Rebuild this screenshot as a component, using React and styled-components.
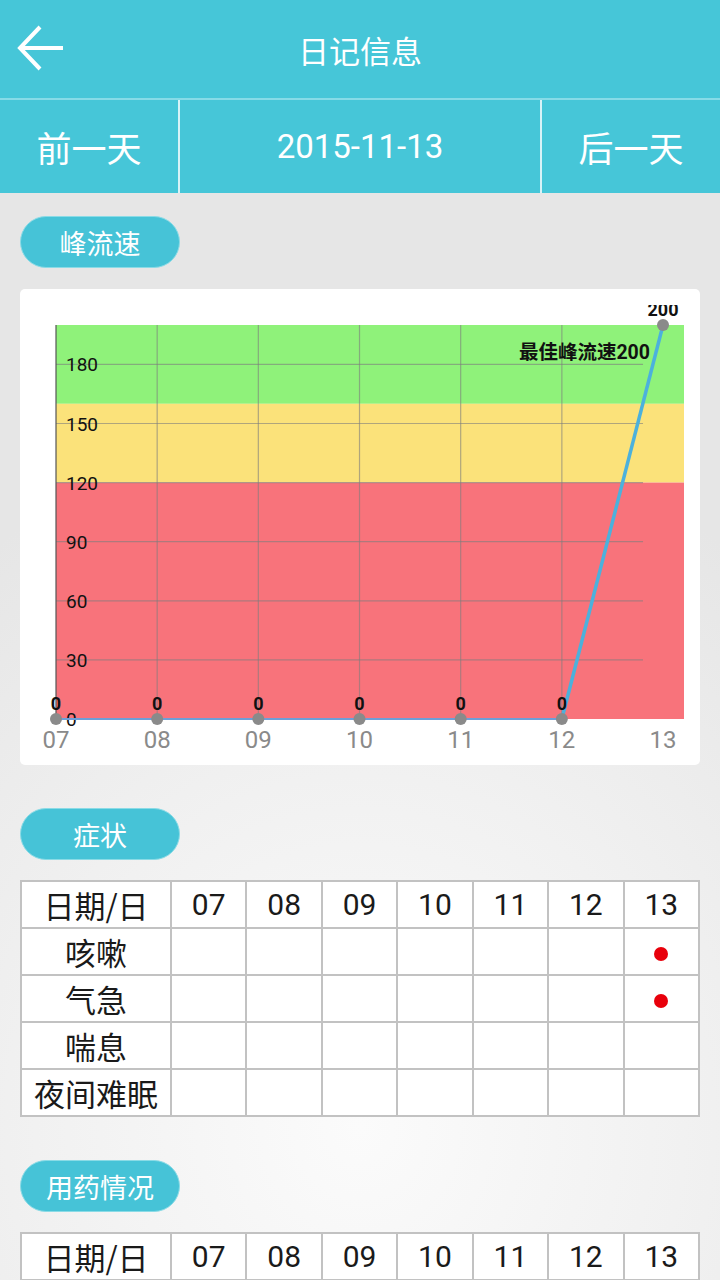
import React from "react";
import styled, { createGlobalStyle } from "styled-components";

const GlobalStyle = createGlobalStyle`
  html, body {
    margin: 0;
    padding: 0;
  }
  body {
    font-family: Roboto, "Noto Sans CJK SC", sans-serif;
    background: #e8e8e8;
  }
`;

const days = ["07", "08", "09", "10", "11", "12", "13"];
const values = [0, 0, 0, 0, 0, 0, 200];

const symptoms = [
  { name: "咳嗽", marks: [6] },
  { name: "气急", marks: [6] },
  { name: "喘息", marks: [] },
  { name: "夜间难眠", marks: [] },
];

function App() {
  return (
    <Page>
      <GlobalStyle />
      <TopBar>
        <BackBtn>
          <svg width="50" height="50" viewBox="0 0 50 50">
            <path
              d="M4 24 H46 M23 3 L3 24 L23 45"
              fill="none"
              stroke="#fff"
              strokeWidth="4"
              strokeLinejoin="miter"
            />
          </svg>
        </BackBtn>
        <Title>日记信息</Title>
      </TopBar>
      <DayNav>
        <NavCell>前一天</NavCell>
        <DateCell>2015-11-13</DateCell>
        <NavCell>后一天</NavCell>
      </DayNav>

      <Content>
        <Pill>峰流速</Pill>
        <ChartCard>
          <PeakChart />
        </ChartCard>

        <Pill gap={43}>症状</Pill>
        <Grid>
          <tbody>
            <tr>
              <HeadCell>日期/日</HeadCell>
              {days.map((d) => (
                <NumCell key={d}>{d}</NumCell>
              ))}
            </tr>
            {symptoms.map((s) => (
              <tr key={s.name}>
                <HeadCell>{s.name}</HeadCell>
                {days.map((d, i) => (
                  <NumCell key={d}>{s.marks.includes(i) && <Dot />}</NumCell>
                ))}
              </tr>
            ))}
          </tbody>
        </Grid>

        <Pill gap={43}>用药情况</Pill>
        <Grid>
          <tbody>
            <tr>
              <HeadCell>日期/日</HeadCell>
              {days.map((d) => (
                <NumCell key={d}>{d}</NumCell>
              ))}
            </tr>
          </tbody>
        </Grid>
      </Content>
    </Page>
  );
}

function PeakChart() {
  const x0 = 36;
  const step = 101.17;
  const base = 430;
  const k = 1.97;
  const px = (i) => x0 + i * step;
  const py = (v) => base - v * k;
  const ticks = [30, 60, 90, 120, 150, 180];

  return (
    <svg width="680" height="476" viewBox="0 0 680 476">
      <defs>
        <clipPath id="plotclip">
          <rect x="0" y="16" width="680" height="460" />
        </clipPath>
      </defs>
      <rect x={x0} y={py(200)} width={628} height={py(160) - py(200)} fill="#8ff27a" />
      <rect x={x0} y={py(160)} width={628} height={py(120) - py(160)} fill="#fbe27a" />
      <rect x={x0} y={py(120)} width={628} height={base - py(120)} fill="#f8737b" />

      {ticks.map((t) => (
        <line key={t} x1={x0} x2={px(6) - 20} y1={py(t)} y2={py(t)} stroke="#7d7d7d" strokeOpacity="0.6" strokeWidth="1.2" />
      ))}
      {[1, 2, 3, 4, 5].map((i) => (
        <line key={i} x1={px(i)} x2={px(i)} y1={py(200)} y2={base} stroke="#7d7d7d" strokeOpacity="0.6" strokeWidth="1.2" />
      ))}
      <line x1={x0} x2={x0} y1={py(200)} y2={base} stroke="#555" strokeWidth="1.2" />

      {ticks.map((t) => (
        <text key={t} x={46} y={py(t) + 7} fontSize="19" fill="#111" fontFamily="Roboto, sans-serif">
          {t}
        </text>
      ))}
      <text x={46} y={base + 7} fontSize="19" fill="#111" fontFamily="Roboto, sans-serif">0</text>

      <line x1={px(0)} x2={px(5)} y1={base} y2={base} stroke="#6d9fd8" strokeWidth="2" />
      <line x1={px(5)} x2={px(6)} y1={base} y2={py(200)} stroke="#4cb1dc" strokeWidth="3.5" />

      {values.map((v, i) => (
        <circle key={i} cx={px(i)} cy={py(v)} r="6" fill="#8a8a8a" />
      ))}
      <g clipPath="url(#plotclip)">
        {values.map((v, i) => (
          <text
            key={i}
            x={px(i)}
            y={py(v) - 9}
            textAnchor="middle"
            fontSize="18"
            fontWeight="bold"
            fill="#111"
            fontFamily="Roboto, sans-serif"
          >
            {v}
          </text>
        ))}
      </g>
      <text
        x={630}
        y={70}
        textAnchor="end"
        fontSize="19.5"
        fontWeight="bold"
        fill="#111"
        fontFamily={'Roboto, "Noto Sans CJK SC", sans-serif'}
      >
        最佳峰流速200
      </text>

      {days.map((d, i) => (
        <text key={d} x={px(i)} y={459} textAnchor="middle" fontSize="24" fill="#8a8a8a" fontFamily="Roboto, sans-serif">
          {d}
        </text>
      ))}
    </svg>
  );
}

export default App;

const Page = styled.div`
  width: 720px;
  min-height: 1280px;
  overflow: hidden;
  background: radial-gradient(ellipse 90% 55% at 50% 88%, #fbfbfb 0%, #f1f1f1 50%, #e6e6e6 100%);
`;

const TopBar = styled.div`
  height: 98px;
  background: #46c6d8;
  display: flex;
  align-items: center;
  justify-content: center;
  position: relative;
  border-bottom: 2px solid #86dbe7;
`;

const BackBtn = styled.div`
  position: absolute;
  left: 17px;
  top: 24px;
  width: 50px;
  height: 50px;
`;

const Title = styled.div`
  color: #fff;
  font-size: 31px;
  font-family: "Noto Sans CJK SC", sans-serif;
`;

const DayNav = styled.div`
  height: 93px;
  background: #46c6d8;
  display: grid;
  grid-template-columns: 180px 1fr 180px;
`;

const NavCell = styled.div`
  display: flex;
  align-items: center;
  justify-content: center;
  color: #fff;
  font-size: 35px;
  font-family: "Noto Sans CJK SC", sans-serif;
  &:first-child {
    border-right: 2px solid #d8f3f7;
  }
  &:last-child {
    border-left: 2px solid #d8f3f7;
  }
`;

const DateCell = styled(NavCell)`
  font-family: Roboto, sans-serif;
  font-size: 33px;
`;

const Content = styled.div`
  padding: 0 20px 0 20px;
  display: flex;
  flex-direction: column;
  align-items: flex-start;
`;

const Pill = styled.div`
  margin-top: ${(p) => (p.gap ? p.gap : 23)}px;
  width: 160px;
  height: 52px;
  border-radius: 26px;
  background: #46c3d7;
  color: #fff;
  font-size: 27px;
  font-family: "Noto Sans CJK SC", sans-serif;
  display: flex;
  align-items: center;
  justify-content: center;
  box-sizing: border-box;
  border: 1px solid #8adbe6;
`;

const ChartCard = styled.div`
  margin-top: 21px;
  width: 680px;
  height: 476px;
  background: #fff;
  border-radius: 5px;
  overflow: hidden;
  svg {
    display: block;
  }
`;

const Grid = styled.table`
  margin-top: 20px;
  width: 680px;
  border-collapse: collapse;
  background: #fff;
  table-layout: fixed;
`;

const HeadCell = styled.td`
  width: 148px;
  height: 45px;
  padding: 0;
  border: 2px solid #c2c2c2;
  text-align: center;
  font-size: 31px;
  color: #1a1a1a;
  font-family: "Noto Sans CJK SC", sans-serif;
  line-height: 1;
`;

const NumCell = styled.td`
  height: 45px;
  padding: 0;
  border: 2px solid #c2c2c2;
  text-align: center;
  font-size: 30px;
  color: #1a1a1a;
  font-family: Roboto, sans-serif;
  line-height: 1;
`;

const Dot = styled.span`
  display: inline-block;
  width: 14px;
  height: 14px;
  border-radius: 50%;
  background: #e8000b;
  vertical-align: middle;
`;
